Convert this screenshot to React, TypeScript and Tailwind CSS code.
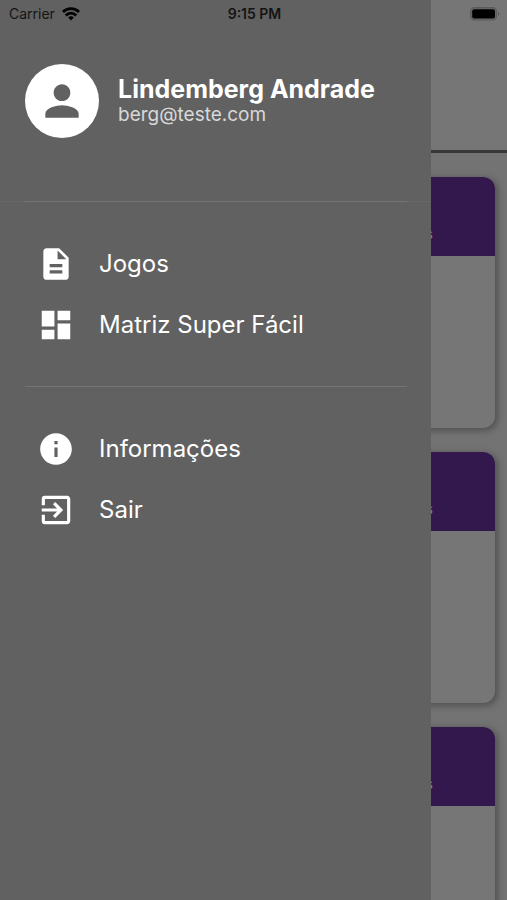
import type { IconType } from "react-icons";
import {
  MdDashboard,
  MdDescription,
  MdExitToApp,
  MdInfo,
  MdPerson,
} from "react-icons/md";

type MenuItem = { label: string; icon: IconType };

const mainItems: MenuItem[] = [
  { label: "Jogos", icon: MdDescription },
  { label: "Matriz Super Fácil", icon: MdDashboard },
];

const secondaryItems: MenuItem[] = [
  { label: "Informações", icon: MdInfo },
  { label: "Sair", icon: MdExitToApp },
];

function StatusBar() {
  return (
    <div className="absolute inset-x-0 top-0 z-20 grid h-7 grid-cols-3 items-center pr-[7px] pl-[9px] text-sm text-[#141414]">
      <div className="flex items-center gap-[7px]">
        <span>Carrier</span>
        <svg viewBox="0 0 18 14" className="h-[14px] w-[18px] text-black" fill="none" stroke="currentColor" strokeWidth="2.8">
          <path d="M1 5a11.3 11.3 0 0 1 16 0" />
          <path d="M3.8 8.4a7.3 7.3 0 0 1 10.4 0" />
          <path d="M9 13.4 6.2 10.6a4 4 0 0 1 5.6 0z" fill="currentColor" stroke="none" />
        </svg>
      </div>
      <span className="text-center font-semibold">9:15 PM</span>
      <svg viewBox="0 0 30 14" className="h-[14px] w-[30px] justify-self-end">
        <rect x="0.8" y="0.6" width="25.6" height="12.4" rx="3.6" fill="#6a6a6a" stroke="#5a5a5a" strokeWidth="1.2" />
        <rect x="2.2" y="2.2" width="22.8" height="9.2" rx="2" fill="#000" />
        <path d="M28 4.8c1.6.6 1.6 3.6 0 4.2z" fill="#555" />
      </svg>
    </div>
  );
}

function MenuList({ items }: { items: MenuItem[] }) {
  return (
    <ul className="py-[31px]">
      {items.map(({ label, icon: Icon }) => (
        <li key={label}>
          <button type="button" className="flex h-[61px] w-full items-center gap-6 pl-3 text-left text-2xl text-white">
            <Icon className="size-[38px] shrink-0" />
            {label}
          </button>
        </li>
      ))}
    </ul>
  );
}

function Drawer() {
  return (
    <aside className="absolute inset-y-0 left-0 z-10 w-[85%] bg-[#616161]">
      {/* User header */}
      <div className="flex h-[201px] items-center gap-[19px] pl-[25px]">
        <div className="flex size-[74px] shrink-0 items-center justify-center rounded-full bg-white text-[#616161]">
          <MdPerson className="size-[50px]" />
        </div>
        <div>
          <p className="text-[25px] leading-7 font-bold text-white">Lindemberg Andrade</p>
          <p className="text-[19px] leading-6 text-[#d8d8d8]">berg@teste.com</p>
        </div>
      </div>

      {/* The header rule reaches the edges, brighter above the menu */}
      <div className="h-px bg-[#676767] pr-6 pl-[25px]">
        <div className="h-px bg-[#757575]" />
      </div>

      <nav className="mr-6 ml-[25px] divide-y divide-[#757575]">
        <MenuList items={mainItems} />
        <MenuList items={secondaryItems} />
      </nav>
    </aside>
  );
}

function GameCard() {
  return (
    <article className="h-[251px] shrink-0 overflow-hidden rounded-xl bg-[#767676] shadow-[2px_2px_6px_1px_#525252]">
      <header className="flex h-[79px] items-end justify-end bg-[#33184d] pr-[62px] pb-3 text-sm text-[#8a7b98]">
        s
      </header>
    </article>
  );
}

export default function App() {
  return (
    <div className="relative h-screen overflow-hidden bg-[#737373] font-['Inter',sans-serif]">
      <StatusBar />
      <Drawer />
      <main>
        <div className="h-[153px] border-b-3 border-[#383838] bg-[#767676]" />
        <div className="flex flex-col gap-6 px-3 pt-6">
          <GameCard />
          <GameCard />
          <GameCard />
        </div>
      </main>
    </div>
  );
}
